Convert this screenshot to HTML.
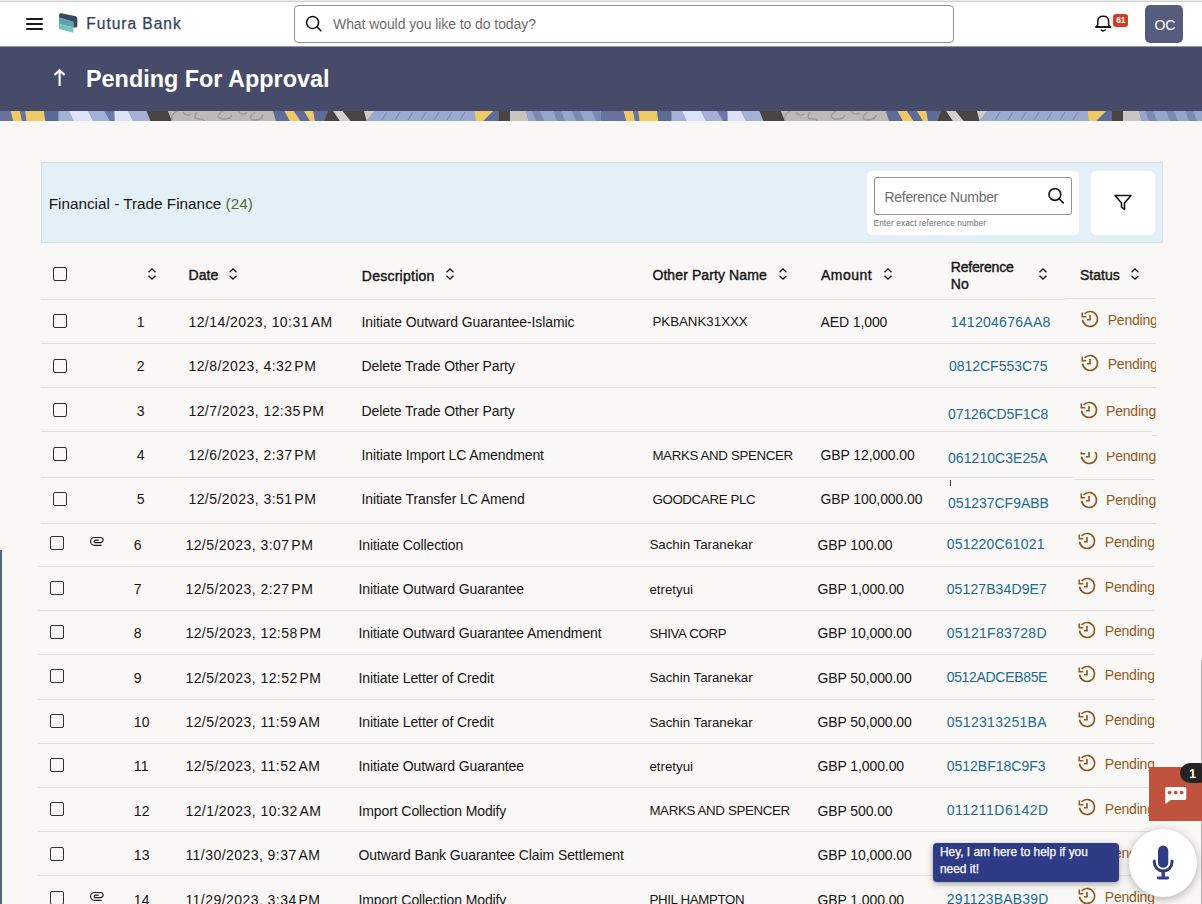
<!DOCTYPE html>
<html><head><meta charset="utf-8"><style>
html,body{margin:0;padding:0;width:1202px;height:904px;overflow:hidden;background:#f9f8f6;font-family:"Liberation Sans", sans-serif}
.t{position:absolute;white-space:nowrap;font-family:"Liberation Sans", sans-serif}
svg{overflow:visible}
</style></head><body>
<div style="position:absolute;left:0.0px;top:0.0px;width:1202.0px;height:46.0px;background:#fff"></div>
<div style="position:absolute;left:0.0px;top:0.0px;width:1202.0px;height:1.0px;background:#e8e8e8"></div>
<div style="position:absolute;left:0.0px;top:1.0px;width:1202.0px;height:1.0px;background:#d0d0d0"></div>
<div style="position:absolute;left:25.5px;top:18.0px;width:17.0px;height:2.0px;background:#1d1b19;border-radius:1px"></div>
<div style="position:absolute;left:25.5px;top:23.0px;width:17.0px;height:2.0px;background:#1d1b19;border-radius:1px"></div>
<div style="position:absolute;left:25.5px;top:28.0px;width:17.0px;height:2.0px;background:#1d1b19;border-radius:1px"></div>
<svg style="position:absolute;left:57px;top:11px" width="23" height="24" viewBox="0 0 23 24">
<path d="M2 4.2 Q2 1.8 4.6 2.3 L18.8 5.2 Q20.3 5.6 20.3 7.2 L20.3 15 Q20.3 16.4 19 16.4 L16.3 16.4 L16.3 11 L2 6.6 Z" fill="#3a4a66"/>
<path d="M2 6.4 L16.3 10.8 L16.3 16.2 L2 13 Z" fill="#5ba2ab"/>
<path d="M2 13 L16.3 16.2 L16.3 21.8 L2 18 Z" fill="#78c4bd"/>
</svg>
<div class="t" style="left:86.3px;top:16.0px;font-size:15.6px;line-height:15.6px;color:#34425a;font-weight:normal;letter-spacing:0.95px;-webkit-text-stroke:0.25px #34425a">Futura Bank</div>
<div style="position:absolute;left:294.0px;top:5.0px;width:660.0px;height:38.0px;box-sizing:border-box;border:1px solid #92908c;border-radius:4px;background:#fff"></div>
<svg style="position:absolute;left:303px;top:13px" width="20" height="20" viewBox="0 0 20 20">
<circle cx="9.6" cy="9.5" r="6.0" fill="none" stroke="#161513" stroke-width="1.6"/>
<line x1="13.9" y1="13.8" x2="17.9" y2="17.8" stroke="#161513" stroke-width="1.6" stroke-linecap="round"/>
</svg>
<div class="t" style="left:333.0px;top:17.1px;font-size:14px;line-height:14px;color:#6f6c68;font-weight:normal;letter-spacing:-0.08px">What would you like to do today?</div>
<svg style="position:absolute;left:1093px;top:13px" width="20" height="21" viewBox="0 0 20 21">
<path d="M2.9 14 L4.8 11.8 L4.8 8.2 Q4.8 3.2 10.2 3.2 Q15.6 3.2 15.6 8.2 L15.6 11.8 L17.5 14 Z" fill="none" stroke="#161513" stroke-width="1.5" stroke-linejoin="round"/>
<line x1="2.6" y1="14" x2="17.8" y2="14" stroke="#161513" stroke-width="2"/>
<path d="M8.2 17 Q10.2 18.8 12.2 17" fill="none" stroke="#161513" stroke-width="1.5" stroke-linecap="round"/>
</svg>
<div style="position:absolute;left:1113.0px;top:14.0px;width:15.0px;height:13.0px;background:#d63b25;border-radius:3px"></div>
<div class="t" style="left:1116.3px;top:15.9px;font-size:8.6px;line-height:8.6px;color:#fff;font-weight:bold;letter-spacing:-0.4px">61</div>
<div style="position:absolute;left:1145.0px;top:5.0px;width:38.0px;height:38.0px;background:#555c7e;border-radius:5px"></div>
<div class="t" style="left:1154.6px;top:17.9px;font-size:14px;line-height:14px;color:#fff;font-weight:normal;letter-spacing:-0.3px">OC</div>
<div style="position:absolute;left:0.0px;top:46.0px;width:1202.0px;height:65.0px;background:#474b6a"></div>
<div style="position:absolute;left:0.0px;top:46.0px;width:1202.0px;height:1.0px;background:#9598aa"></div>
<svg style="position:absolute;left:50px;top:66px" width="20" height="24" viewBox="0 0 20 24"><path d="M9.6 5 L9.6 19.9 M4.5 8.9 L9.6 4.2 L14.6 8.9" fill="none" stroke="#fff" stroke-width="2.1" stroke-linecap="butt" stroke-linejoin="miter"/></svg>
<div class="t" style="left:86.0px;top:67.7px;font-size:23.4px;line-height:23.4px;color:#fff;font-weight:bold;">Pending For Approval</div>
<svg style="position:absolute;left:0;top:111px" width="1202" height="10" viewBox="0 0 1202 10"><rect x="0" y="0" width="1202" height="10" fill="#8f9cc4"/><polygon points="-12,0 11,0 13.3,10 -12,10" fill="#6873a0"/><polygon points="10.7,0 20,0 22,10 13.3,10" fill="#edca65"/><polygon points="20,0 25.3,0 26.6,10 22,10" fill="#6873a0"/><polygon points="25.3,0 44,0 45.3,10 26.6,10" fill="#edca65"/><polygon points="44,0 58.6,0 58.6,10 45.3,10" fill="#5d6a95"/><polygon points="58.6,0 69.2,0 74,10 58.6,10" fill="#a5b0d6"/><polygon points="69.2,0 88,0 93,10 74,10" fill="#dde3f6"/><polygon points="88,0 107,0 109,10 93,10" fill="#a5b0d6"/><polygon points="104,0 114.5,0 114,10 110,10" fill="#6b79a8"/><polygon points="114.5,0 128,0 133,10 115,10" fill="#dde3f6"/><polygon points="128,0 146.5,0 150.5,10 133,10" fill="#a5b0d6"/><polygon points="146.5,0 168,0 172,10 150.5,10" fill="#484543"/><polygon points="168,0 273,0 276,10 172,10" fill="#bdb9b5"/><polygon points="273,0 284.5,0 290,10 276,10" fill="#5f6c99"/><polygon points="284.5,0 293.8,0 300.5,10 290,10" fill="#edca65"/><polygon points="293.8,0 304,0 310,10 300.5,10" fill="#5f6c99"/><polygon points="304,0 313.3,0 315,10 310,10" fill="#edca65"/><polygon points="313.3,0 328,0 324,10 315,10" fill="#5f6c99"/><polygon points="328,0 333.3,0 340,10 324,10" fill="#484543"/><polygon points="333.3,0 342.6,0 350.6,10 340,10" fill="#d2d0cc"/><polygon points="342.6,0 374.6,0 366.6,10 350.6,10" fill="#484543"/><polygon points="364,0 374.6,0 366.6,10 366.6,10" fill="#cfccc6"/><polygon points="374.6,0 474.6,0 477,10 366.6,10" fill="#9ca9cf"/><polygon points="474.6,0 493.3,0 483.3,10 476,10" fill="#edca65"/><polygon points="493.3,0 498.6,0 498.6,10 483.3,10" fill="#5f6c99"/><polygon points="498.6,0 510,0 510,10 498.6,10" fill="#484543"/><polygon points="510,0 526,0 528.6,10 510,10" fill="#c8c5c0"/><polygon points="526,0 625,0 625,10 528.6,10" fill="#97a4cb"/><path d="M387 1 L382 9" stroke="#7f8cb6" stroke-width="1.4"/><path d="M400 1 L395 9" stroke="#7f8cb6" stroke-width="1.4"/><path d="M413 1 L408 9" stroke="#7f8cb6" stroke-width="1.4"/><path d="M426 1 L421 9" stroke="#7f8cb6" stroke-width="1.4"/><path d="M439 1 L434 9" stroke="#7f8cb6" stroke-width="1.4"/><path d="M452 1 L447 9" stroke="#7f8cb6" stroke-width="1.4"/><path d="M465 1 L460 9" stroke="#7f8cb6" stroke-width="1.4"/><polygon points="532,0 540,0 544,10 536,10" fill="#7c89b4"/><polygon points="553,0 561,0 565,10 557,10" fill="#7c89b4"/><polygon points="572,0 580,0 584,10 576,10" fill="#7c89b4"/><polygon points="592,0 600,0 604,10 596,10" fill="#7c89b4"/><path d="M172 10 Q170 4 177 0" fill="none" stroke="#9c9894" stroke-width="1.4"/><path d="M183 1 Q186 6 191 3" fill="none" stroke="#9c9894" stroke-width="1.4"/><path d="M197 1 Q192 8 199 8 Q204 8 204 10" fill="none" stroke="#9c9894" stroke-width="1.4"/><path d="M223 0 Q214 6 222 8 Q230 9 232 4" fill="none" stroke="#9c9894" stroke-width="1.4"/><path d="M238 0 Q241 5 247 2" fill="none" stroke="#9c9894" stroke-width="1.4"/><path d="M255 1 Q246 8 254 9 Q262 9 263 4" fill="none" stroke="#9c9894" stroke-width="1.4"/><polygon points="601,0 624,0 626.3,10 601,10" fill="#6873a0"/><polygon points="623.7,0 633,0 635,10 626.3,10" fill="#edca65"/><polygon points="633,0 638.3,0 639.6,10 635,10" fill="#6873a0"/><polygon points="638.3,0 657,0 658.3,10 639.6,10" fill="#edca65"/><polygon points="657,0 671.6,0 671.6,10 658.3,10" fill="#5d6a95"/><polygon points="671.6,0 682.2,0 687,10 671.6,10" fill="#a5b0d6"/><polygon points="682.2,0 701,0 706,10 687,10" fill="#dde3f6"/><polygon points="701,0 720,0 722,10 706,10" fill="#a5b0d6"/><polygon points="717,0 727.5,0 727,10 723,10" fill="#6b79a8"/><polygon points="727.5,0 741,0 746,10 728,10" fill="#dde3f6"/><polygon points="741,0 759.5,0 763.5,10 746,10" fill="#a5b0d6"/><polygon points="759.5,0 781,0 785,10 763.5,10" fill="#484543"/><polygon points="781,0 886,0 889,10 785,10" fill="#bdb9b5"/><polygon points="886,0 897.5,0 903,10 889,10" fill="#5f6c99"/><polygon points="897.5,0 906.8,0 913.5,10 903,10" fill="#edca65"/><polygon points="906.8,0 917,0 923,10 913.5,10" fill="#5f6c99"/><polygon points="917,0 926.3,0 928,10 923,10" fill="#edca65"/><polygon points="926.3,0 941,0 937,10 928,10" fill="#5f6c99"/><polygon points="941,0 946.3,0 953,10 937,10" fill="#484543"/><polygon points="946.3,0 955.6,0 963.6,10 953,10" fill="#d2d0cc"/><polygon points="955.6,0 987.6,0 979.6,10 963.6,10" fill="#484543"/><polygon points="977,0 987.6,0 979.6,10 979.6,10" fill="#cfccc6"/><polygon points="987.6,0 1087.6,0 1090,10 979.6,10" fill="#9ca9cf"/><polygon points="1087.6,0 1106.3,0 1096.3,10 1089,10" fill="#edca65"/><polygon points="1106.3,0 1111.6,0 1111.6,10 1096.3,10" fill="#5f6c99"/><polygon points="1111.6,0 1123,0 1123,10 1111.6,10" fill="#484543"/><polygon points="1123,0 1139,0 1141.6,10 1123,10" fill="#c8c5c0"/><polygon points="1139,0 1238,0 1238,10 1141.6,10" fill="#97a4cb"/><path d="M1000 1 L995 9" stroke="#7f8cb6" stroke-width="1.4"/><path d="M1013 1 L1008 9" stroke="#7f8cb6" stroke-width="1.4"/><path d="M1026 1 L1021 9" stroke="#7f8cb6" stroke-width="1.4"/><path d="M1039 1 L1034 9" stroke="#7f8cb6" stroke-width="1.4"/><path d="M1052 1 L1047 9" stroke="#7f8cb6" stroke-width="1.4"/><path d="M1065 1 L1060 9" stroke="#7f8cb6" stroke-width="1.4"/><path d="M1078 1 L1073 9" stroke="#7f8cb6" stroke-width="1.4"/><polygon points="1145,0 1153,0 1157,10 1149,10" fill="#7c89b4"/><polygon points="1166,0 1174,0 1178,10 1170,10" fill="#7c89b4"/><polygon points="1185,0 1193,0 1197,10 1189,10" fill="#7c89b4"/><polygon points="1205,0 1213,0 1217,10 1209,10" fill="#7c89b4"/><path d="M785 10 Q783 4 790 0" fill="none" stroke="#9c9894" stroke-width="1.4"/><path d="M796 1 Q799 6 804 3" fill="none" stroke="#9c9894" stroke-width="1.4"/><path d="M810 1 Q805 8 812 8 Q817 8 817 10" fill="none" stroke="#9c9894" stroke-width="1.4"/><path d="M836 0 Q827 6 835 8 Q843 9 845 4" fill="none" stroke="#9c9894" stroke-width="1.4"/><path d="M851 0 Q854 5 860 2" fill="none" stroke="#9c9894" stroke-width="1.4"/><path d="M868 1 Q859 8 867 9 Q875 9 876 4" fill="none" stroke="#9c9894" stroke-width="1.4"/></svg>
<div style="position:absolute;left:0.0px;top:121.0px;width:1202.0px;height:783.0px;background:#f9f8f6"></div>
<div style="position:absolute;left:41.0px;top:162.0px;width:1122.0px;height:81.0px;box-sizing:border-box;border:1px solid #d3e0e8;background:#e4f0f7"></div>
<div class="t" style="left:48.7px;top:196.3px;font-size:15.3px;line-height:15.3px;color:#161513;font-weight:normal;">Financial - Trade Finance <span style="color:#556b33">(24)</span></div>
<div style="position:absolute;left:866.5px;top:170.5px;width:212.5px;height:64.5px;background:#fff;border-radius:5px"></div>
<div style="position:absolute;left:873.5px;top:177.0px;width:198.5px;height:38.0px;box-sizing:border-box;border:1px solid #92908c;border-radius:3px;background:#fff"></div>
<div class="t" style="left:884.5px;top:189.6px;font-size:14px;line-height:14px;color:#6f6c68;font-weight:normal;letter-spacing:-0.3px">Reference Number</div>
<svg style="position:absolute;left:1044px;top:185px" width="22" height="22" viewBox="0 0 22 22">
<circle cx="10.9" cy="9.5" r="5.9" fill="none" stroke="#161513" stroke-width="1.6"/>
<line x1="15.1" y1="13.7" x2="19.3" y2="17.9" stroke="#161513" stroke-width="1.6" stroke-linecap="round"/>
</svg>
<div class="t" style="left:873.5px;top:219.0px;font-size:8.3px;line-height:8.3px;color:#6f6c68;font-weight:normal;letter-spacing:0.1px">Enter exact reference number</div>
<div style="position:absolute;left:1090.5px;top:170.5px;width:64.5px;height:64.5px;background:#fff;border-radius:5px"></div>
<svg style="position:absolute;left:1111.5px;top:191px" width="22" height="22" viewBox="0 0 22 22">
<path d="M3 4.5 L19 4.5 L12.5 12 L12.5 18.5 L9.5 16 L9.5 12 Z" fill="none" stroke="#161513" stroke-width="1.6" stroke-linejoin="round"/>
</svg>
<div style="position:absolute;left:53.0px;top:267.0px;width:14.0px;height:14.0px;box-sizing:border-box;border:1.4px solid #33312e;border-radius:2px"></div>
<svg style="position:absolute;left:146.5px;top:267.5px" width="10" height="12" viewBox="0 0 10 12"><path d="M1.5 4.3 L5 1 L8.5 4.3 M1.5 7.7 L5 11 L8.5 7.7" fill="none" stroke="#161513" stroke-width="1.4"/></svg>
<div class="t" style="left:188.6px;top:268.0px;font-size:14px;line-height:14px;color:#161513;font-weight:normal;-webkit-text-stroke:0.4px #161513;letter-spacing:0px">Date</div>
<svg style="position:absolute;left:228px;top:267.5px" width="10" height="12" viewBox="0 0 10 12"><path d="M1.5 4.3 L5 1 L8.5 4.3 M1.5 7.7 L5 11 L8.5 7.7" fill="none" stroke="#161513" stroke-width="1.4"/></svg>
<div class="t" style="left:361.8px;top:268.7px;font-size:14px;line-height:14px;color:#161513;font-weight:normal;-webkit-text-stroke:0.4px #161513;letter-spacing:0.25px">Description</div>
<svg style="position:absolute;left:444.5px;top:267.5px" width="10" height="12" viewBox="0 0 10 12"><path d="M1.5 4.3 L5 1 L8.5 4.3 M1.5 7.7 L5 11 L8.5 7.7" fill="none" stroke="#161513" stroke-width="1.4"/></svg>
<div class="t" style="left:652.4px;top:268.4px;font-size:14px;line-height:14px;color:#161513;font-weight:normal;-webkit-text-stroke:0.4px #161513;letter-spacing:0.1px">Other Party Name</div>
<svg style="position:absolute;left:777.5px;top:267.5px" width="10" height="12" viewBox="0 0 10 12"><path d="M1.5 4.3 L5 1 L8.5 4.3 M1.5 7.7 L5 11 L8.5 7.7" fill="none" stroke="#161513" stroke-width="1.4"/></svg>
<div class="t" style="left:821.0px;top:268.4px;font-size:14px;line-height:14px;color:#161513;font-weight:normal;-webkit-text-stroke:0.4px #161513;letter-spacing:0.5px">Amount</div>
<svg style="position:absolute;left:882.5px;top:267.5px" width="10" height="12" viewBox="0 0 10 12"><path d="M1.5 4.3 L5 1 L8.5 4.3 M1.5 7.7 L5 11 L8.5 7.7" fill="none" stroke="#161513" stroke-width="1.4"/></svg>
<div class="t" style="left:950.8px;top:259.5px;font-size:14px;line-height:14px;color:#161513;font-weight:normal;-webkit-text-stroke:0.4px #161513;letter-spacing:-0.2px">Reference</div>
<div class="t" style="left:950.8px;top:277.3px;font-size:14px;line-height:14px;color:#161513;font-weight:normal;-webkit-text-stroke:0.4px #161513;">No</div>
<svg style="position:absolute;left:1037.5px;top:267.5px" width="10" height="12" viewBox="0 0 10 12"><path d="M1.5 4.3 L5 1 L8.5 4.3 M1.5 7.7 L5 11 L8.5 7.7" fill="none" stroke="#161513" stroke-width="1.4"/></svg>
<div class="t" style="left:1080.0px;top:268.3px;font-size:14px;line-height:14px;color:#161513;font-weight:normal;-webkit-text-stroke:0.4px #161513;">Status</div>
<svg style="position:absolute;left:1130px;top:267.5px" width="10" height="12" viewBox="0 0 10 12"><path d="M1.5 4.3 L5 1 L8.5 4.3 M1.5 7.7 L5 11 L8.5 7.7" fill="none" stroke="#161513" stroke-width="1.4"/></svg>
<div style="position:absolute;left:41.0px;top:299.0px;width:1023.5px;height:1.0px;background:#e3e0dc"></div>
<div style="position:absolute;left:1064.5px;top:298.0px;width:91.5px;height:1.0px;background:#e3e0dc"></div>
<div style="position:absolute;left:41.0px;top:343.3px;width:1115.0px;height:1.0px;background:#e3e0dc"></div>
<div style="position:absolute;left:41.0px;top:387.3px;width:1115.0px;height:1.0px;background:#e3e0dc"></div>
<div style="position:absolute;left:41.0px;top:431.3px;width:1111.0px;height:1.0px;background:#e3e0dc"></div>
<div style="position:absolute;left:1152.0px;top:434.5px;width:6.0px;height:1.0px;background:#e3e0dc"></div>
<div style="position:absolute;left:41.0px;top:476.5px;width:1034.0px;height:1.0px;background:#e3e0dc"></div>
<div style="position:absolute;left:1075.0px;top:479.0px;width:80.0px;height:1.0px;background:#e3e0dc"></div>
<div style="position:absolute;left:41.0px;top:523.0px;width:1115.0px;height:1.0px;background:#e3e0dc"></div>
<div style="position:absolute;left:38.0px;top:565.5px;width:1115.5px;height:1.0px;background:#e3e0dc"></div>
<div style="position:absolute;left:38.0px;top:610.2px;width:1115.5px;height:1.0px;background:#e3e0dc"></div>
<div style="position:absolute;left:38.0px;top:654.4px;width:1115.5px;height:1.0px;background:#e3e0dc"></div>
<div style="position:absolute;left:38.0px;top:698.6px;width:1115.5px;height:1.0px;background:#e3e0dc"></div>
<div style="position:absolute;left:38.0px;top:743.1px;width:1115.5px;height:1.0px;background:#e3e0dc"></div>
<div style="position:absolute;left:38.0px;top:787.1px;width:1115.5px;height:1.0px;background:#e3e0dc"></div>
<div style="position:absolute;left:38.0px;top:831.0px;width:1115.5px;height:1.0px;background:#e3e0dc"></div>
<div style="position:absolute;left:38.0px;top:875.3px;width:1115.5px;height:1.0px;background:#e3e0dc"></div>
<div style="position:absolute;left:53.0px;top:314.2px;width:14.0px;height:14.0px;box-sizing:border-box;border:1.4px solid #33312e;border-radius:2px"></div>
<div class="t" style="left:136.8px;top:314.8px;font-size:14px;line-height:14px;color:#161513;font-weight:normal;letter-spacing:0.2px">1</div>
<div class="t" style="left:188.4px;top:314.8px;font-size:14px;line-height:14px;color:#161513;font-weight:normal;letter-spacing:0.45px">12/14/2023, 10:31<span style="letter-spacing:-2px"> </span>AM</div>
<div class="t" style="left:361.5px;top:314.8px;font-size:14px;line-height:14px;color:#161513;font-weight:normal;letter-spacing:-0.1px">Initiate Outward Guarantee-Islamic</div>
<div class="t" style="left:652.4px;top:315.4px;font-size:13.3px;line-height:13.3px;color:#161513;font-weight:normal;">PKBANK31XXX</div>
<div class="t" style="left:820.5px;top:314.8px;font-size:14px;line-height:14px;color:#161513;font-weight:normal;letter-spacing:-0.1px">AED 1,000</div>
<div class="t" style="left:950.7px;top:314.7px;font-size:14px;line-height:14px;color:#1c6a91;font-weight:normal;letter-spacing:0.28px">141204676AA8</div>
<div style="position:absolute;left:1070px;top:0px;width:85.5px;height:904px;overflow:hidden"><div style="position:absolute;left:-1070px;top:0px"><div style="position:absolute;left:1081.3px;top:310.4px;width:18px;height:18px"><svg width="18" height="18" viewBox="0 0 18 18"><path d="M1.6 9.6 A7.5 7.5 0 1 0 3.6 3.9" fill="none" stroke="#8e561c" stroke-width="1.6"/><path d="M1.3 2.6 L1.3 6.8 L5.3 6.8" fill="none" stroke="#8e561c" stroke-width="1.6" stroke-linejoin="miter"/><path d="M9 4.9 L9 9.7 L6 9.7" fill="none" stroke="#8e561c" stroke-width="1.6" stroke-linejoin="miter"/></svg></div><div class="t" style="left:1107.7px;top:312.6px;font-size:14px;line-height:14px;color:#93591c;font-weight:normal;letter-spacing:-0.2px">Pending</div>
</div></div>
<div style="position:absolute;left:53.0px;top:358.7px;width:14.0px;height:14.0px;box-sizing:border-box;border:1.4px solid #33312e;border-radius:2px"></div>
<div class="t" style="left:136.8px;top:359.3px;font-size:14px;line-height:14px;color:#161513;font-weight:normal;letter-spacing:0.2px">2</div>
<div class="t" style="left:188.4px;top:359.3px;font-size:14px;line-height:14px;color:#161513;font-weight:normal;letter-spacing:0.45px">12/8/2023, 4:32<span style="letter-spacing:-2px"> </span>PM</div>
<div class="t" style="left:361.5px;top:359.3px;font-size:14px;line-height:14px;color:#161513;font-weight:normal;letter-spacing:-0.1px">Delete Trade Other Party</div>
<div class="t" style="left:949.0px;top:358.5px;font-size:14px;line-height:14px;color:#1c6a91;font-weight:normal;letter-spacing:-0.03px">0812CF553C75</div>
<div style="position:absolute;left:1070px;top:0px;width:85.5px;height:904px;overflow:hidden"><div style="position:absolute;left:-1070px;top:0px"><div style="position:absolute;left:1081.3px;top:353.9px;width:18px;height:18px"><svg width="18" height="18" viewBox="0 0 18 18"><path d="M1.6 9.6 A7.5 7.5 0 1 0 3.6 3.9" fill="none" stroke="#8e561c" stroke-width="1.6"/><path d="M1.3 2.6 L1.3 6.8 L5.3 6.8" fill="none" stroke="#8e561c" stroke-width="1.6" stroke-linejoin="miter"/><path d="M9 4.9 L9 9.7 L6 9.7" fill="none" stroke="#8e561c" stroke-width="1.6" stroke-linejoin="miter"/></svg></div><div class="t" style="left:1107.7px;top:357.1px;font-size:14px;line-height:14px;color:#93591c;font-weight:normal;letter-spacing:-0.2px">Pending</div>
</div></div>
<div style="position:absolute;left:53.0px;top:403.3px;width:14.0px;height:14.0px;box-sizing:border-box;border:1.4px solid #33312e;border-radius:2px"></div>
<div class="t" style="left:136.8px;top:403.9px;font-size:14px;line-height:14px;color:#161513;font-weight:normal;letter-spacing:0.2px">3</div>
<div class="t" style="left:188.4px;top:403.9px;font-size:14px;line-height:14px;color:#161513;font-weight:normal;letter-spacing:0.45px">12/7/2023, 12:35<span style="letter-spacing:-2px"> </span>PM</div>
<div class="t" style="left:361.5px;top:403.9px;font-size:14px;line-height:14px;color:#161513;font-weight:normal;letter-spacing:-0.1px">Delete Trade Other Party</div>
<div class="t" style="left:948.0px;top:406.7px;font-size:14px;line-height:14px;color:#1c6a91;font-weight:normal;letter-spacing:-0.08px">07126CD5F1C8</div>
<div style="position:absolute;left:1070px;top:0px;width:85.5px;height:904px;overflow:hidden"><div style="position:absolute;left:-1070px;top:0px"><div style="position:absolute;left:1080.3px;top:401.4px;width:18px;height:18px"><svg width="18" height="18" viewBox="0 0 18 18"><path d="M1.6 9.6 A7.5 7.5 0 1 0 3.6 3.9" fill="none" stroke="#8e561c" stroke-width="1.6"/><path d="M1.3 2.6 L1.3 6.8 L5.3 6.8" fill="none" stroke="#8e561c" stroke-width="1.6" stroke-linejoin="miter"/><path d="M9 4.9 L9 9.7 L6 9.7" fill="none" stroke="#8e561c" stroke-width="1.6" stroke-linejoin="miter"/></svg></div><div class="t" style="left:1106.0px;top:404.4px;font-size:14px;line-height:14px;color:#93591c;font-weight:normal;letter-spacing:-0.2px">Pending</div>
</div></div>
<div style="position:absolute;left:53.0px;top:447.3px;width:14.0px;height:14.0px;box-sizing:border-box;border:1.4px solid #33312e;border-radius:2px"></div>
<div class="t" style="left:136.8px;top:447.9px;font-size:14px;line-height:14px;color:#161513;font-weight:normal;letter-spacing:0.2px">4</div>
<div class="t" style="left:188.4px;top:447.9px;font-size:14px;line-height:14px;color:#161513;font-weight:normal;letter-spacing:0.45px">12/6/2023, 2:37<span style="letter-spacing:-2px"> </span>PM</div>
<div class="t" style="left:361.5px;top:447.9px;font-size:14px;line-height:14px;color:#161513;font-weight:normal;letter-spacing:-0.1px">Initiate Import LC Amendment</div>
<div class="t" style="left:652.4px;top:448.5px;font-size:13.3px;line-height:13.3px;color:#161513;font-weight:normal;letter-spacing:-0.35px">MARKS AND SPENCER</div>
<div class="t" style="left:820.5px;top:447.9px;font-size:14px;line-height:14px;color:#161513;font-weight:normal;letter-spacing:-0.1px">GBP 12,000.00</div>
<div class="t" style="left:948.0px;top:451.1px;font-size:14px;line-height:14px;color:#1c6a91;font-weight:normal;letter-spacing:0.06px">061210C3E25A</div>
<div style="position:absolute;left:1070px;top:452px;width:85.5px;height:452px;overflow:hidden"><div style="position:absolute;left:-1070px;top:-452px"><div style="position:absolute;left:1080.3px;top:447.2px;width:18px;height:18px"><svg width="18" height="18" viewBox="0 0 18 18"><path d="M1.6 9.6 A7.5 7.5 0 1 0 3.6 3.9" fill="none" stroke="#8e561c" stroke-width="1.6"/><path d="M1.3 2.6 L1.3 6.8 L5.3 6.8" fill="none" stroke="#8e561c" stroke-width="1.6" stroke-linejoin="miter"/><path d="M9 4.9 L9 9.7 L6 9.7" fill="none" stroke="#8e561c" stroke-width="1.6" stroke-linejoin="miter"/></svg></div><div class="t" style="left:1106.0px;top:449.1px;font-size:14px;line-height:14px;color:#93591c;font-weight:normal;letter-spacing:-0.2px">Pending</div>
</div></div>
<div style="position:absolute;left:53.0px;top:491.8px;width:14.0px;height:14.0px;box-sizing:border-box;border:1.4px solid #33312e;border-radius:2px"></div>
<div class="t" style="left:136.8px;top:492.4px;font-size:14px;line-height:14px;color:#161513;font-weight:normal;letter-spacing:0.2px">5</div>
<div class="t" style="left:188.4px;top:492.4px;font-size:14px;line-height:14px;color:#161513;font-weight:normal;letter-spacing:0.45px">12/5/2023, 3:51<span style="letter-spacing:-2px"> </span>PM</div>
<div class="t" style="left:361.5px;top:492.4px;font-size:14px;line-height:14px;color:#161513;font-weight:normal;letter-spacing:-0.1px">Initiate Transfer LC Amend</div>
<div class="t" style="left:652.4px;top:493.0px;font-size:13.3px;line-height:13.3px;color:#161513;font-weight:normal;letter-spacing:-0.35px">GOODCARE PLC</div>
<div class="t" style="left:820.5px;top:492.4px;font-size:14px;line-height:14px;color:#161513;font-weight:normal;letter-spacing:-0.1px">GBP 100,000.00</div>
<div class="t" style="left:948.0px;top:495.6px;font-size:14px;line-height:14px;color:#1c6a91;font-weight:normal;letter-spacing:-0.03px">051237CF9ABB</div>
<div style="position:absolute;left:1070px;top:0px;width:85.5px;height:904px;overflow:hidden"><div style="position:absolute;left:-1070px;top:0px"><div style="position:absolute;left:1080.3px;top:491.0px;width:18px;height:18px"><svg width="18" height="18" viewBox="0 0 18 18"><path d="M1.6 9.6 A7.5 7.5 0 1 0 3.6 3.9" fill="none" stroke="#8e561c" stroke-width="1.6"/><path d="M1.3 2.6 L1.3 6.8 L5.3 6.8" fill="none" stroke="#8e561c" stroke-width="1.6" stroke-linejoin="miter"/><path d="M9 4.9 L9 9.7 L6 9.7" fill="none" stroke="#8e561c" stroke-width="1.6" stroke-linejoin="miter"/></svg></div><div class="t" style="left:1106.0px;top:492.9px;font-size:14px;line-height:14px;color:#93591c;font-weight:normal;letter-spacing:-0.2px">Pending</div>
</div></div>
<div style="position:absolute;left:50.0px;top:536.1px;width:14.0px;height:14.0px;box-sizing:border-box;border:1.4px solid #33312e;border-radius:2px"></div>
<div class="t" style="left:133.8px;top:537.6px;font-size:14px;line-height:14px;color:#161513;font-weight:normal;letter-spacing:0.2px">6</div>
<div class="t" style="left:185.4px;top:537.6px;font-size:14px;line-height:14px;color:#161513;font-weight:normal;letter-spacing:0.45px">12/5/2023, 3:07<span style="letter-spacing:-2px"> </span>PM</div>
<div class="t" style="left:358.5px;top:537.6px;font-size:14px;line-height:14px;color:#161513;font-weight:normal;letter-spacing:-0.1px">Initiate Collection</div>
<div class="t" style="left:649.4px;top:538.2px;font-size:13.3px;line-height:13.3px;color:#161513;font-weight:normal;">Sachin Taranekar</div>
<div class="t" style="left:817.5px;top:537.6px;font-size:14px;line-height:14px;color:#161513;font-weight:normal;letter-spacing:-0.1px">GBP 100.00</div>
<div class="t" style="left:946.7px;top:537.1px;font-size:14px;line-height:14px;color:#1c6a91;font-weight:normal;letter-spacing:0.19px">051220C61021</div>
<div style="position:absolute;left:1070px;top:0px;width:83.79999999999995px;height:904px;overflow:hidden"><div style="position:absolute;left:-1070px;top:0px"><div style="position:absolute;left:1078.2px;top:532.2px;width:18px;height:18px"><svg width="18" height="18" viewBox="0 0 18 18"><path d="M1.6 9.6 A7.5 7.5 0 1 0 3.6 3.9" fill="none" stroke="#8e561c" stroke-width="1.6"/><path d="M1.3 2.6 L1.3 6.8 L5.3 6.8" fill="none" stroke="#8e561c" stroke-width="1.6" stroke-linejoin="miter"/><path d="M9 4.9 L9 9.7 L6 9.7" fill="none" stroke="#8e561c" stroke-width="1.6" stroke-linejoin="miter"/></svg></div><div class="t" style="left:1104.8px;top:535.3px;font-size:14px;line-height:14px;color:#93591c;font-weight:normal;letter-spacing:-0.2px">Pending</div>
</div></div>
<div style="position:absolute;left:50.0px;top:580.5px;width:14.0px;height:14.0px;box-sizing:border-box;border:1.4px solid #33312e;border-radius:2px"></div>
<div class="t" style="left:133.8px;top:582.0px;font-size:14px;line-height:14px;color:#161513;font-weight:normal;letter-spacing:0.2px">7</div>
<div class="t" style="left:185.4px;top:582.0px;font-size:14px;line-height:14px;color:#161513;font-weight:normal;letter-spacing:0.45px">12/5/2023, 2:27<span style="letter-spacing:-2px"> </span>PM</div>
<div class="t" style="left:358.5px;top:582.0px;font-size:14px;line-height:14px;color:#161513;font-weight:normal;letter-spacing:-0.1px">Initiate Outward Guarantee</div>
<div class="t" style="left:649.4px;top:582.6px;font-size:13.3px;line-height:13.3px;color:#161513;font-weight:normal;">etretyui</div>
<div class="t" style="left:817.5px;top:582.0px;font-size:14px;line-height:14px;color:#161513;font-weight:normal;letter-spacing:-0.1px">GBP 1,000.00</div>
<div class="t" style="left:946.7px;top:581.5px;font-size:14px;line-height:14px;color:#1c6a91;font-weight:normal;letter-spacing:0.11px">05127B34D9E7</div>
<div style="position:absolute;left:1070px;top:0px;width:83.79999999999995px;height:904px;overflow:hidden"><div style="position:absolute;left:-1070px;top:0px"><div style="position:absolute;left:1078.2px;top:576.6px;width:18px;height:18px"><svg width="18" height="18" viewBox="0 0 18 18"><path d="M1.6 9.6 A7.5 7.5 0 1 0 3.6 3.9" fill="none" stroke="#8e561c" stroke-width="1.6"/><path d="M1.3 2.6 L1.3 6.8 L5.3 6.8" fill="none" stroke="#8e561c" stroke-width="1.6" stroke-linejoin="miter"/><path d="M9 4.9 L9 9.7 L6 9.7" fill="none" stroke="#8e561c" stroke-width="1.6" stroke-linejoin="miter"/></svg></div><div class="t" style="left:1104.8px;top:579.7px;font-size:14px;line-height:14px;color:#93591c;font-weight:normal;letter-spacing:-0.2px">Pending</div>
</div></div>
<div style="position:absolute;left:50.0px;top:624.8px;width:14.0px;height:14.0px;box-sizing:border-box;border:1.4px solid #33312e;border-radius:2px"></div>
<div class="t" style="left:133.8px;top:626.4px;font-size:14px;line-height:14px;color:#161513;font-weight:normal;letter-spacing:0.2px">8</div>
<div class="t" style="left:185.4px;top:626.4px;font-size:14px;line-height:14px;color:#161513;font-weight:normal;letter-spacing:0.45px">12/5/2023, 12:58<span style="letter-spacing:-2px"> </span>PM</div>
<div class="t" style="left:358.5px;top:626.4px;font-size:14px;line-height:14px;color:#161513;font-weight:normal;letter-spacing:-0.1px">Initiate Outward Guarantee Amendment</div>
<div class="t" style="left:649.4px;top:627.0px;font-size:13.3px;line-height:13.3px;color:#161513;font-weight:normal;letter-spacing:-0.35px">SHIVA CORP</div>
<div class="t" style="left:817.5px;top:626.4px;font-size:14px;line-height:14px;color:#161513;font-weight:normal;letter-spacing:-0.1px">GBP 10,000.00</div>
<div class="t" style="left:946.7px;top:625.9px;font-size:14px;line-height:14px;color:#1c6a91;font-weight:normal;letter-spacing:0.3px">05121F83728D</div>
<div style="position:absolute;left:1070px;top:0px;width:83.79999999999995px;height:904px;overflow:hidden"><div style="position:absolute;left:-1070px;top:0px"><div style="position:absolute;left:1078.2px;top:620.9px;width:18px;height:18px"><svg width="18" height="18" viewBox="0 0 18 18"><path d="M1.6 9.6 A7.5 7.5 0 1 0 3.6 3.9" fill="none" stroke="#8e561c" stroke-width="1.6"/><path d="M1.3 2.6 L1.3 6.8 L5.3 6.8" fill="none" stroke="#8e561c" stroke-width="1.6" stroke-linejoin="miter"/><path d="M9 4.9 L9 9.7 L6 9.7" fill="none" stroke="#8e561c" stroke-width="1.6" stroke-linejoin="miter"/></svg></div><div class="t" style="left:1104.8px;top:624.1px;font-size:14px;line-height:14px;color:#93591c;font-weight:normal;letter-spacing:-0.2px">Pending</div>
</div></div>
<div style="position:absolute;left:50.0px;top:669.2px;width:14.0px;height:14.0px;box-sizing:border-box;border:1.4px solid #33312e;border-radius:2px"></div>
<div class="t" style="left:133.8px;top:670.7px;font-size:14px;line-height:14px;color:#161513;font-weight:normal;letter-spacing:0.2px">9</div>
<div class="t" style="left:185.4px;top:670.7px;font-size:14px;line-height:14px;color:#161513;font-weight:normal;letter-spacing:0.45px">12/5/2023, 12:52<span style="letter-spacing:-2px"> </span>PM</div>
<div class="t" style="left:358.5px;top:670.7px;font-size:14px;line-height:14px;color:#161513;font-weight:normal;letter-spacing:-0.1px">Initiate Letter of Credit</div>
<div class="t" style="left:649.4px;top:671.3px;font-size:13.3px;line-height:13.3px;color:#161513;font-weight:normal;">Sachin Taranekar</div>
<div class="t" style="left:817.5px;top:670.7px;font-size:14px;line-height:14px;color:#161513;font-weight:normal;letter-spacing:-0.1px">GBP 50,000.00</div>
<div class="t" style="left:946.7px;top:670.2px;font-size:14px;line-height:14px;color:#1c6a91;font-weight:normal;letter-spacing:-0.32px">0512ADCEB85E</div>
<div style="position:absolute;left:1070px;top:0px;width:83.79999999999995px;height:904px;overflow:hidden"><div style="position:absolute;left:-1070px;top:0px"><div style="position:absolute;left:1078.2px;top:665.3px;width:18px;height:18px"><svg width="18" height="18" viewBox="0 0 18 18"><path d="M1.6 9.6 A7.5 7.5 0 1 0 3.6 3.9" fill="none" stroke="#8e561c" stroke-width="1.6"/><path d="M1.3 2.6 L1.3 6.8 L5.3 6.8" fill="none" stroke="#8e561c" stroke-width="1.6" stroke-linejoin="miter"/><path d="M9 4.9 L9 9.7 L6 9.7" fill="none" stroke="#8e561c" stroke-width="1.6" stroke-linejoin="miter"/></svg></div><div class="t" style="left:1104.8px;top:668.4px;font-size:14px;line-height:14px;color:#93591c;font-weight:normal;letter-spacing:-0.2px">Pending</div>
</div></div>
<div style="position:absolute;left:50.0px;top:713.5px;width:14.0px;height:14.0px;box-sizing:border-box;border:1.4px solid #33312e;border-radius:2px"></div>
<div class="t" style="left:133.8px;top:715.1px;font-size:14px;line-height:14px;color:#161513;font-weight:normal;letter-spacing:0.2px">10</div>
<div class="t" style="left:185.4px;top:715.1px;font-size:14px;line-height:14px;color:#161513;font-weight:normal;letter-spacing:0.45px">12/5/2023, 11:59<span style="letter-spacing:-2px"> </span>AM</div>
<div class="t" style="left:358.5px;top:715.1px;font-size:14px;line-height:14px;color:#161513;font-weight:normal;letter-spacing:-0.1px">Initiate Letter of Credit</div>
<div class="t" style="left:649.4px;top:715.7px;font-size:13.3px;line-height:13.3px;color:#161513;font-weight:normal;">Sachin Taranekar</div>
<div class="t" style="left:817.5px;top:715.1px;font-size:14px;line-height:14px;color:#161513;font-weight:normal;letter-spacing:-0.1px">GBP 50,000.00</div>
<div class="t" style="left:946.7px;top:714.6px;font-size:14px;line-height:14px;color:#1c6a91;font-weight:normal;letter-spacing:0.3px">0512313251BA</div>
<div style="position:absolute;left:1070px;top:0px;width:83.79999999999995px;height:904px;overflow:hidden"><div style="position:absolute;left:-1070px;top:0px"><div style="position:absolute;left:1078.2px;top:709.6px;width:18px;height:18px"><svg width="18" height="18" viewBox="0 0 18 18"><path d="M1.6 9.6 A7.5 7.5 0 1 0 3.6 3.9" fill="none" stroke="#8e561c" stroke-width="1.6"/><path d="M1.3 2.6 L1.3 6.8 L5.3 6.8" fill="none" stroke="#8e561c" stroke-width="1.6" stroke-linejoin="miter"/><path d="M9 4.9 L9 9.7 L6 9.7" fill="none" stroke="#8e561c" stroke-width="1.6" stroke-linejoin="miter"/></svg></div><div class="t" style="left:1104.8px;top:712.8px;font-size:14px;line-height:14px;color:#93591c;font-weight:normal;letter-spacing:-0.2px">Pending</div>
</div></div>
<div style="position:absolute;left:50.0px;top:757.9px;width:14.0px;height:14.0px;box-sizing:border-box;border:1.4px solid #33312e;border-radius:2px"></div>
<div class="t" style="left:133.8px;top:759.4px;font-size:14px;line-height:14px;color:#161513;font-weight:normal;letter-spacing:0.2px">11</div>
<div class="t" style="left:185.4px;top:759.4px;font-size:14px;line-height:14px;color:#161513;font-weight:normal;letter-spacing:0.45px">12/5/2023, 11:52<span style="letter-spacing:-2px"> </span>AM</div>
<div class="t" style="left:358.5px;top:759.4px;font-size:14px;line-height:14px;color:#161513;font-weight:normal;letter-spacing:-0.1px">Initiate Outward Guarantee</div>
<div class="t" style="left:649.4px;top:760.0px;font-size:13.3px;line-height:13.3px;color:#161513;font-weight:normal;">etretyui</div>
<div class="t" style="left:817.5px;top:759.4px;font-size:14px;line-height:14px;color:#161513;font-weight:normal;letter-spacing:-0.1px">GBP 1,000.00</div>
<div class="t" style="left:946.7px;top:758.9px;font-size:14px;line-height:14px;color:#1c6a91;font-weight:normal;letter-spacing:-0.0px">0512BF18C9F3</div>
<div style="position:absolute;left:1070px;top:0px;width:83.79999999999995px;height:904px;overflow:hidden"><div style="position:absolute;left:-1070px;top:0px"><div style="position:absolute;left:1078.2px;top:754.0px;width:18px;height:18px"><svg width="18" height="18" viewBox="0 0 18 18"><path d="M1.6 9.6 A7.5 7.5 0 1 0 3.6 3.9" fill="none" stroke="#8e561c" stroke-width="1.6"/><path d="M1.3 2.6 L1.3 6.8 L5.3 6.8" fill="none" stroke="#8e561c" stroke-width="1.6" stroke-linejoin="miter"/><path d="M9 4.9 L9 9.7 L6 9.7" fill="none" stroke="#8e561c" stroke-width="1.6" stroke-linejoin="miter"/></svg></div><div class="t" style="left:1104.8px;top:757.1px;font-size:14px;line-height:14px;color:#93591c;font-weight:normal;letter-spacing:-0.2px">Pending</div>
</div></div>
<div style="position:absolute;left:50.0px;top:802.3px;width:14.0px;height:14.0px;box-sizing:border-box;border:1.4px solid #33312e;border-radius:2px"></div>
<div class="t" style="left:133.8px;top:803.8px;font-size:14px;line-height:14px;color:#161513;font-weight:normal;letter-spacing:0.2px">12</div>
<div class="t" style="left:185.4px;top:803.8px;font-size:14px;line-height:14px;color:#161513;font-weight:normal;letter-spacing:0.45px">12/1/2023, 10:32<span style="letter-spacing:-2px"> </span>AM</div>
<div class="t" style="left:358.5px;top:803.8px;font-size:14px;line-height:14px;color:#161513;font-weight:normal;letter-spacing:-0.1px">Import Collection Modify</div>
<div class="t" style="left:649.4px;top:804.4px;font-size:13.3px;line-height:13.3px;color:#161513;font-weight:normal;letter-spacing:-0.35px">MARKS AND SPENCER</div>
<div class="t" style="left:817.5px;top:803.8px;font-size:14px;line-height:14px;color:#161513;font-weight:normal;letter-spacing:-0.1px">GBP 500.00</div>
<div class="t" style="left:946.7px;top:803.3px;font-size:14px;line-height:14px;color:#1c6a91;font-weight:normal;letter-spacing:0.5px">011211D6142D</div>
<div style="position:absolute;left:1070px;top:0px;width:83.79999999999995px;height:904px;overflow:hidden"><div style="position:absolute;left:-1070px;top:0px"><div style="position:absolute;left:1078.2px;top:798.4px;width:18px;height:18px"><svg width="18" height="18" viewBox="0 0 18 18"><path d="M1.6 9.6 A7.5 7.5 0 1 0 3.6 3.9" fill="none" stroke="#8e561c" stroke-width="1.6"/><path d="M1.3 2.6 L1.3 6.8 L5.3 6.8" fill="none" stroke="#8e561c" stroke-width="1.6" stroke-linejoin="miter"/><path d="M9 4.9 L9 9.7 L6 9.7" fill="none" stroke="#8e561c" stroke-width="1.6" stroke-linejoin="miter"/></svg></div><div class="t" style="left:1104.8px;top:801.5px;font-size:14px;line-height:14px;color:#93591c;font-weight:normal;letter-spacing:-0.2px">Pending</div>
</div></div>
<div style="position:absolute;left:50.0px;top:846.6px;width:14.0px;height:14.0px;box-sizing:border-box;border:1.4px solid #33312e;border-radius:2px"></div>
<div class="t" style="left:133.8px;top:848.2px;font-size:14px;line-height:14px;color:#161513;font-weight:normal;letter-spacing:0.2px">13</div>
<div class="t" style="left:185.4px;top:848.2px;font-size:14px;line-height:14px;color:#161513;font-weight:normal;letter-spacing:0.45px">11/30/2023, 9:37<span style="letter-spacing:-2px"> </span>AM</div>
<div class="t" style="left:358.5px;top:848.2px;font-size:14px;line-height:14px;color:#161513;font-weight:normal;letter-spacing:-0.1px">Outward Bank Guarantee Claim Settlement</div>
<div class="t" style="left:817.5px;top:848.2px;font-size:14px;line-height:14px;color:#161513;font-weight:normal;letter-spacing:-0.1px">GBP 10,000.00</div>
<div style="position:absolute;left:1070px;top:0px;width:83.79999999999995px;height:904px;overflow:hidden"><div style="position:absolute;left:-1070px;top:0px"><div style="position:absolute;left:1078.2px;top:842.7px;width:18px;height:18px"><svg width="18" height="18" viewBox="0 0 18 18"><path d="M1.6 9.6 A7.5 7.5 0 1 0 3.6 3.9" fill="none" stroke="#8e561c" stroke-width="1.6"/><path d="M1.3 2.6 L1.3 6.8 L5.3 6.8" fill="none" stroke="#8e561c" stroke-width="1.6" stroke-linejoin="miter"/><path d="M9 4.9 L9 9.7 L6 9.7" fill="none" stroke="#8e561c" stroke-width="1.6" stroke-linejoin="miter"/></svg></div><div class="t" style="left:1104.8px;top:845.9px;font-size:14px;line-height:14px;color:#93591c;font-weight:normal;letter-spacing:-0.2px">Pending</div>
</div></div>
<div style="position:absolute;left:50.0px;top:891.0px;width:14.0px;height:14.0px;box-sizing:border-box;border:1.4px solid #33312e;border-radius:2px"></div>
<div class="t" style="left:133.8px;top:892.5px;font-size:14px;line-height:14px;color:#161513;font-weight:normal;letter-spacing:0.2px">14</div>
<div class="t" style="left:185.4px;top:892.5px;font-size:14px;line-height:14px;color:#161513;font-weight:normal;letter-spacing:0.45px">11/29/2023, 3:34<span style="letter-spacing:-2px"> </span>PM</div>
<div class="t" style="left:358.5px;top:892.5px;font-size:14px;line-height:14px;color:#161513;font-weight:normal;letter-spacing:-0.1px">Import Collection Modify</div>
<div class="t" style="left:649.4px;top:893.1px;font-size:13.3px;line-height:13.3px;color:#161513;font-weight:normal;letter-spacing:-0.35px">PHIL HAMPTON</div>
<div class="t" style="left:817.5px;top:892.5px;font-size:14px;line-height:14px;color:#161513;font-weight:normal;letter-spacing:-0.1px">GBP 1,000.00</div>
<div class="t" style="left:946.7px;top:892.0px;font-size:14px;line-height:14px;color:#1c6a91;font-weight:normal;letter-spacing:0.21px">291123BAB39D</div>
<div style="position:absolute;left:1070px;top:0px;width:83.79999999999995px;height:904px;overflow:hidden"><div style="position:absolute;left:-1070px;top:0px"><div style="position:absolute;left:1078.2px;top:887.1px;width:18px;height:18px"><svg width="18" height="18" viewBox="0 0 18 18"><path d="M1.6 9.6 A7.5 7.5 0 1 0 3.6 3.9" fill="none" stroke="#8e561c" stroke-width="1.6"/><path d="M1.3 2.6 L1.3 6.8 L5.3 6.8" fill="none" stroke="#8e561c" stroke-width="1.6" stroke-linejoin="miter"/><path d="M9 4.9 L9 9.7 L6 9.7" fill="none" stroke="#8e561c" stroke-width="1.6" stroke-linejoin="miter"/></svg></div><div class="t" style="left:1104.8px;top:890.2px;font-size:14px;line-height:14px;color:#93591c;font-weight:normal;letter-spacing:-0.2px">Pending</div>
</div></div>
<svg style="position:absolute;left:91px;top:536px" width="14" height="12" viewBox="0 0 14 12"><path d="M10.6 9.3 L3.5 9.3 A3.9 3.9 0 0 1 3.5 1.5 L9.5 1.5 A2.6 2.6 0 0 1 9.5 6.7 L4.5 6.7 A1.25 1.25 0 0 1 4.5 4.2 L7.8 4.2" fill="none" stroke="#1d1b19" stroke-width="1.2"/></svg>
<svg style="position:absolute;left:91px;top:890.5px" width="14" height="12" viewBox="0 0 14 12"><path d="M10.6 9.3 L3.5 9.3 A3.9 3.9 0 0 1 3.5 1.5 L9.5 1.5 A2.6 2.6 0 0 1 9.5 6.7 L4.5 6.7 A1.25 1.25 0 0 1 4.5 4.2 L7.8 4.2" fill="none" stroke="#1d1b19" stroke-width="1.2"/></svg>
<div style="position:absolute;left:950.0px;top:479.5px;width:1.0px;height:6.0px;background:#333"></div>
<div style="position:absolute;left:0.0px;top:550.0px;width:2.0px;height:354.0px;background:#4e6a72"></div>
<div style="position:absolute;left:1201.0px;top:660.0px;width:1.0px;height:244.0px;background:#b3b0ac"></div>
<div style="position:absolute;left:1148.5px;top:767.0px;width:54.0px;height:54.0px;background:#c0533d"></div>
<svg style="position:absolute;left:1163px;top:785px" width="24" height="20" viewBox="0 0 24 20">
<path d="M3.6 2 L22 2 Q23.3 2 23.3 3.3 L23.3 13.7 Q23.3 15 22 15 L7.5 15 L3.5 18.3 L2.3 18.3 L2.3 3.3 Q2.3 2 3.6 2 Z" fill="#fff"/>
<circle cx="6.6" cy="7.6" r="1.9" fill="#c0533d"/><circle cx="12.7" cy="7.6" r="1.9" fill="#c0533d"/><circle cx="18.6" cy="7.6" r="1.9" fill="#c0533d"/>
</svg>
<div style="position:absolute;left:1180.0px;top:763.0px;width:30.0px;height:20.0px;background:#262422;border-radius:10px"></div>
<div class="t" style="left:1189.3px;top:767.8px;font-size:12px;line-height:12px;color:#fff;font-weight:bold;">1</div>
<div style="position:absolute;left:1129.0px;top:828.5px;width:68.0px;height:68.0px;background:#fff;border-radius:50%;box-shadow:0 2px 10px rgba(0,0,0,0.3)"></div>
<svg style="position:absolute;left:1148px;top:844px" width="30" height="38" viewBox="0 0 30 38">
<rect x="10" y="1.5" width="10.3" height="22.3" rx="5.15" fill="#2f3d87"/>
<path d="M6.3 17 L6.3 18.25 A8.85 8.85 0 0 0 24 18.25 L24 17" fill="none" stroke="#2f3d87" stroke-width="3" stroke-linecap="round"/>
<rect x="13.5" y="26.5" width="3.4" height="7" fill="#2f3d87"/>
<rect x="8.9" y="32.6" width="12.2" height="2.9" rx="1.45" fill="#2f3d87"/>
</svg>
<div style="position:absolute;left:933.0px;top:843.0px;width:186.0px;height:39.0px;background:#2f3b87;border-radius:4px;box-shadow:0 2px 6px rgba(0,0,0,0.35)"></div>
<div class="t" style="left:940.0px;top:846.9px;font-size:11.9px;line-height:11.9px;color:#fff;font-weight:normal;-webkit-text-stroke:0.25px #fff">Hey, I am here to help if you</div>
<div class="t" style="left:940.0px;top:863.5px;font-size:11.9px;line-height:11.9px;color:#fff;font-weight:normal;-webkit-text-stroke:0.25px #fff">need it!</div>
</body></html>
